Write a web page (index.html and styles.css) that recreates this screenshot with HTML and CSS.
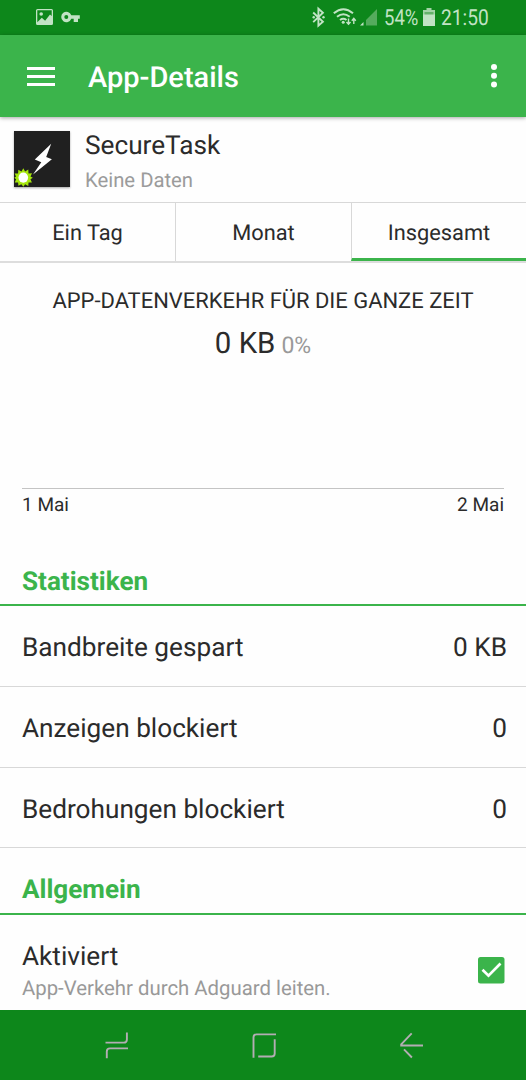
FILE: index.html
```html
<!DOCTYPE html>
<html lang="de">
<head>
<meta charset="utf-8">
<title>App-Details</title>
<link rel="stylesheet" href="styles.css">
</head>
<body>
<div class="screen">
  <div class="status">
    <svg class="status-left" viewBox="0 0 60 35" width="60" height="35" fill="#c1e3c4">
      <path fill-rule="evenodd" d="M2.500 9h14a1.500 1.500 0 0 1 1.500 1.500v13a1.500 1.500 0 0 1-1.500 1.500h-14A1.500 1.500 0 0 1 1 23.500v-13A1.500 1.500 0 0 1 2.500 9zM2.300 10.300v12l4.500-4.500 3.300 3 4.900-6.300 1.700 1.500v-5.700z"/>
      <circle cx="6.200" cy="14" r="1.800"/>
      <path fill-rule="evenodd" d="M36.300 15.300A5.200 5.200 0 1 0 36.300 18.800H38.700V22H43V18.800H44.800V15.300zM31.300 15a2 2 0 1 1 0 4 2 2 0 0 1 0-4z"/>
    </svg>
    <svg class="status-right" viewBox="310 0 70 35" width="70" height="35" fill="none" stroke="#c1e3c4">
      <path stroke-width="1.900" d="M313.200 12.500l9.700 9.200-4.500 4V8.700l4.500 4-9.700 9.400"/>
      <circle cx="313.700" cy="17.300" r="1.200" fill="#c1e3c4" stroke="none"/><circle cx="323.500" cy="17.300" r="1.200" fill="#c1e3c4" stroke="none"/>
      <path stroke-width="2" d="M333.800 13.200q9.600-8 19.200 0M337 16.800q6.400-5 12.700 0M340 20q3.300-2.400 6.500 0"/>
      <circle cx="343.200" cy="22.300" r="1.500" fill="#c1e3c4" stroke="none"/>
      <path stroke-width="1.400" d="M348.500 18.500v5.500M346.500 22l2 2.300 2-2.300M353.800 24v-5.500M351.800 20.700l2-2.300 2 2.300"/>
      <path d="M363.500 22v3.500H360z" fill="#c1e3c4" stroke="none"/>
      <path d="M377 9v16.500h-11V20z" fill="#55ab5d" stroke="none"/>
    </svg>
    <span class="percent">54%</span>
    <svg class="battery" viewBox="0 0 12 18" width="12" height="18">
      <path d="M3.500 0h5v2H12v5H0V2h3.500z" fill="#a3d3a7"/><path d="M1.500 4h9v3h-9z" fill="#64b26a"/><path d="M0 6.500h12V18H0z" fill="#c1e3c4"/>
    </svg>
    <span class="clock">21:50</span>
  </div>
  <header class="appbar">
    <svg class="menu" viewBox="0 0 28 19" width="28" height="19" fill="#fff"><path d="M0 0h28v2.900H0zM0 8h28v2.900H0zM0 16h28v2.900H0z"/></svg>
    <h1 class="title">App-Details</h1>
    <svg class="more" viewBox="0 0 6 24" width="6" height="24" fill="#fff"><circle cx="3" cy="3" r="3"/><circle cx="3" cy="11.700" r="3"/><circle cx="3" cy="20.500" r="3"/></svg>
  </header>
  <section class="app">
    <svg class="app-icon" viewBox="0 0 56 56" width="56" height="56">
      <path fill="#202020" d="M0 0h56v56H0z"/>
      <path fill="#fff" d="M37.200 12.800L20.800 28.500l6.500 2.800-8.300 12.200 18.900-15.300-5.700-2.100z"/>
      <path fill="#a5e60c" d="M9.300 37.300l1.800 3.200 3.200-1.900.2 3.800 3.500-.1-1.500 3.300 2.300 1.200-2.300 1.500 1.400 3.200-3.400-.1-.2 3.500-3.200-1.700-1.800 2.500-1.900-2.500-3 1.500-.3-3.300-3.300.1 1.300-3.200-1.800-1.500 1.800-1.300-1.500-3.100 3.500.1.200-3.800 3.200 1.900z"/>
      <ellipse cx="9.300" cy="46.600" rx="4.800" ry="5.100" fill="#fff"/>
    </svg>
    <div class="app-text"><div class="app-name">SecureTask</div><div class="app-data">Keine Daten</div></div>
  </section>
  <nav class="tabs">
    <div class="tab">Ein Tag</div>
    <div class="tab">Monat</div>
    <div class="tab active">Insgesamt</div>
  </nav>
  <section class="chart">
    <h2 class="chart-title">APP-DATENVERKEHR FÜR DIE GANZE ZEIT</h2>
    <div class="total"><span class="amount">0 KB</span><span class="share">0%</span></div>
    <div class="plot"></div>
    <div class="axis"><span>1 Mai</span><span>2 Mai</span></div>
  </section>
  <h3 class="section first">Statistiken</h3>
  <div class="row"><span>Bandbreite gespart</span><span>0 KB</span></div>
  <div class="row"><span>Anzeigen blockiert</span><span>0</span></div>
  <div class="row last"><span>Bedrohungen blockiert</span><span>0</span></div>
  <h3 class="section">Allgemein</h3>
  <div class="setting">
    <div><div class="set-name">Aktiviert</div><div class="set-info">App-Verkehr durch Adguard leiten.</div></div>
    <svg class="check" viewBox="0 0 27 27" width="27" height="27"><rect width="26.500" height="26.500" rx="2.500" fill="#3bb44b"/><path d="M4.500 12.800l6 5.900L22.500 6.500" fill="none" stroke="#fff" stroke-width="2.700"/></svg>
  </div>
  <footer class="navbar">
    <svg viewBox="90 1010 350 70" width="350" height="70" fill="none" stroke="#b3adb3" stroke-width="1.900">
      <path d="M105.500 1042.600h18.200q3.200 0 3.200-3.200v-7M128 1048.400h-18q-3.200 0-3.200 3.200v6.700"/>
      <path d="M276 1034.400h-19.500q-3 0-3 3v20.300M274.700 1039.300v14.200q0 3-3 3h-13.500"/>
      <path d="M411.700 1033.400l-10.500 11v1.100h21.800M404 1049.300l7.900 8.200"/>
    </svg>
  </footer>
</div>
</body>
</html>
```
FILE: styles.css
```css
* { box-sizing: border-box; }
body { margin: 0; background: #fefefe; font-family: Roboto, "Liberation Sans", sans-serif; color: #2b2b2b; text-rendering: geometricPrecision; }
h1, h2, h3 { margin: 0; font-weight: 400; }
svg { display: block; flex: none; }
span { white-space: nowrap; }
.screen { width: 526px; height: 1080px; display: flex; flex-direction: column; overflow: hidden; }
.status { height: 35px; flex: none; background: #0d871b; display: flex; color: #c1e3c4; font-size: 22px; line-height: 38px; padding-left: 35px; }
.status-right { margin-left: 215px; }
.percent { width: 34px; margin-left: 4px; transform: scaleX(.84); transform-origin: 0 50%; }
.battery { margin: 8px 0 0 5px; }
.clock { margin-left: 6px; transform: scaleX(.87); transform-origin: 0 50%; }
.appbar { height: 82px; flex: none; background: #3bb44b; display: flex; align-items: center; padding: 0 29px 0 27px; position: relative; box-shadow: 0 1px 4px rgba(0,0,0,.35); }
.title { font-size: 29px; font-weight: 500; color: #fff; margin-left: 33px; line-height: 34px; padding-top: 4px; }
.more { margin-left: auto; }
.app { height: 85px; flex: none; display: flex; padding: 14px 14px 0; }
.app-icon { box-shadow: 0 1px 2px rgba(0,0,0,.35); }
.app-text { margin: 0 0 0 15px; }
.app-name { font-size: 26.200px; line-height: 30px; }
.app-data { font-size: 20.300px; line-height: 30px; margin-top: 4px; color: #9b9b9b; }
.tabs { height: 61px; flex: none; display: grid; grid-template-columns: 175px 176px 175px; border-top: 1px solid #d8d8d8; border-bottom: 2px solid #ddd; font-size: 21.800px; line-height: 62px; text-align: center; }
.tab + .tab { border-left: 1px solid #d8d8d8; }
.tab { height: 58px; }
.active { border-bottom: 3px solid #3bb44b; }
.chart { height: 272px; flex: none; padding: 24px 22px 0; }
.chart-title { font-size: 21.950px; line-height: 30px; text-align: center; }
.total { display: flex; justify-content: center; align-items: baseline; gap: 6px; line-height: 40px; margin-top: 7px; }
.amount { font-size: 29.400px; }
.share { font-size: 23px; color: #999; }
.plot { height: 123px; border-bottom: 1px solid #c4c4c4; }
.axis { display: flex; justify-content: space-between; font-size: 19px; line-height: 32px; }
.section { height: 67px; flex: none; border-bottom: 2px solid #3bb44b; color: #3bb44b; font-size: 26.100px; font-weight: 700; line-height: 30px; padding: 27px 22px 0; }
.first { height: 71px; padding-top: 32px; }
.row { height: 81px; flex: none; border-bottom: 1px solid #d8d8d8; display: flex; justify-content: space-between; padding: 0 19px 0 22px; font-size: 26.200px; line-height: 84px; }
.last { height: 80px; }
.setting { height: 95px; flex: none; display: flex; justify-content: space-between; padding: 27px 21px 0 22px; }
.set-name { font-size: 26.200px; line-height: 30px; }
.set-info { font-size: 20.350px; line-height: 30px; margin-top: 1px; color: #999; }
.check { margin-top: 15px; }
.navbar { height: 70px; flex: none; background: #0d871b; padding-left: 90px; }
```
